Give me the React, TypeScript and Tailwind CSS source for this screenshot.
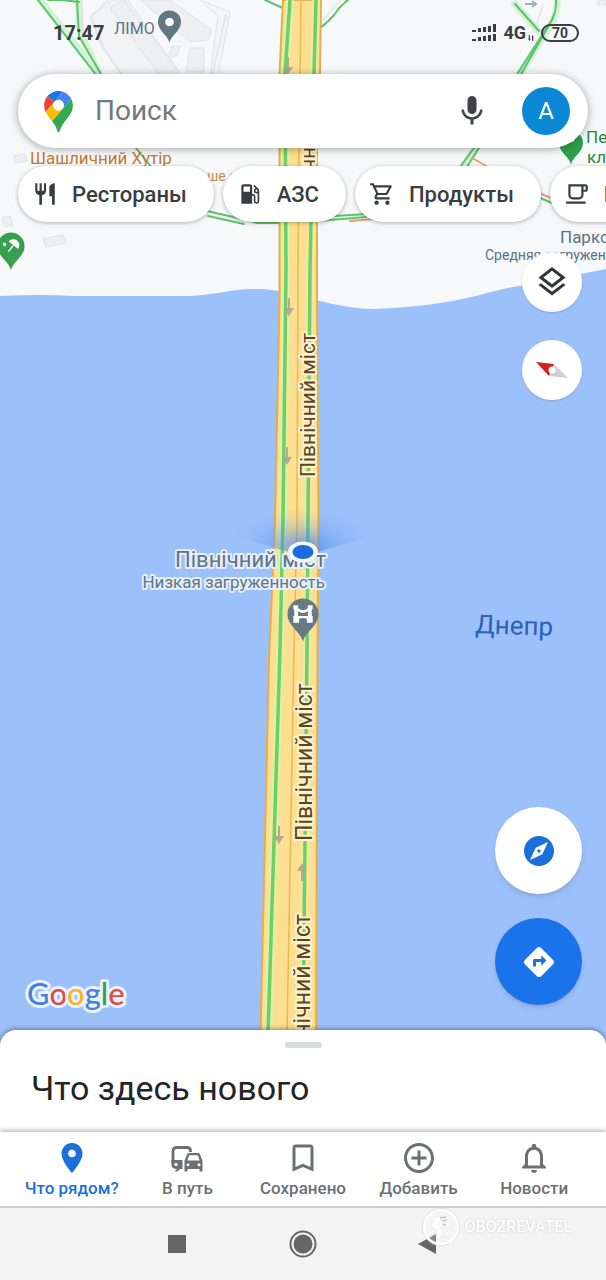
import type { ReactNode } from "react";
import {
    MdAddCircleOutline,
    MdBookmarkBorder,
    MdDirections,
    MdExplore,
    MdLocalGasStation,
    MdMic,
    MdNotificationsNone,
    MdOutlineLayers,
    MdOutlineLocalCafe,
    MdOutlineShoppingCart,
    MdPlace,
    MdRestaurant,
} from "react-icons/md";

const chips = [
    { label: "Рестораны", icon: <MdRestaurant className="size-[26px]" /> },
    { label: "АЗС", icon: <MdLocalGasStation className="size-[26px]" /> },
    { label: "Продукты", icon: <MdOutlineShoppingCart className="size-[26px]" /> },
    { label: "Кофе", icon: <MdOutlineLocalCafe className="size-[26px]" /> },
];

const tabs = [
    { label: "Что рядом?", icon: <MdPlace className="size-9" />, active: true },
    { label: "В путь", icon: <CommuteIcon />, active: false },
    { label: "Сохранено", icon: <MdBookmarkBorder className="size-9" />, active: false },
    { label: "Добавить", icon: <MdAddCircleOutline className="size-9" />, active: false },
    { label: "Новости", icon: <MdNotificationsNone className="size-9" />, active: false },
];

function CommuteIcon() {
    return (
        <svg viewBox="0 0 36 36" className="size-9" fill="none">
            <path d="M4 24V11Q4 7.500 8 7.500H18Q21.500 7.500 21.500 11V12" stroke="currentColor" strokeWidth="2.800" />
            <path d="M2.600 20H13.500V29H11l-2.500 2.500H5.500L8 29Q2.600 29 2.600 25z" fill="currentColor" />
            <circle cx="7" cy="24.500" r="1.700" fill="#fff" />
            <path d="M15.500 21l2.500-6.500q.5-1.500 2-1.500h9q1.500 0 2 1.500l2.500 6.500v10.500h-3V29h-12v2.500h-3z" fill="currentColor" />
            <path d="M18.300 20.500l1.900-5.300h8.600l1.900 5.300z" fill="#fff" />
            <circle cx="19" cy="24.800" r="1.500" fill="#fff" />
            <circle cx="30" cy="24.800" r="1.500" fill="#fff" />
        </svg>
    );
}

function MapsLogo() {
    return (
        <svg viewBox="0 0 92.3 132.3" className="h-[41px] w-[29px]">
            <path fill="#1a73e8" d="M60.2 2.2C55.8.8 51 0 46.1 0 32 0 19.3 6.4 10.8 16.5l21.8 18.3L60.2 2.2z" />
            <path fill="#ea4335" d="M10.800 16.500C4.100 24.500 0 34.900 0 46.100c0 8.700 1.700 15.700 4.600 22l28-33.300-21.800-18.300z" />
            <path fill="#4285f4" d="M46.200 28.500c9.800 0 17.700 7.900 17.700 17.700 0 4.300-1.600 8.300-4.200 11.400 0 0 13.900-16.600 27.500-32.700-5.600-10.800-15.300-19-27-22.700L32.600 34.800c3.300-3.800 8.100-6.300 13.600-6.300" />
            <path fill="#fbbc04" d="M46.200 63.800c-9.800 0-17.700-7.900-17.700-17.700 0-4.300 1.500-8.300 4.100-11.300l-28 33.300c4.800 10.600 12.800 19.200 21 29.900l34.100-40.500c-3.300 3.900-8.100 6.300-13.500 6.300" />
            <path fill="#34a853" d="M59.100 109.200c15.400-24.100 33.300-35 33.300-63 0-7.700-1.900-14.900-5.200-21.300L25.600 98c2.600 3.400 5.300 7.300 7.900 11.300 9.400 14.500 6.800 23.100 12.800 23.100s3.400-8.700 12.800-23.200" />
        </svg>
    );
}

function GoogleLogo() {
    return (
        <svg viewBox="0 0 110 48" className="h-12 w-[110px]" role="img" aria-label="Google">
            <text
                x="5"
                y="32"
                fontSize="31"
                fontWeight="500"
                stroke="#e9f2fe"
                strokeWidth="6"
                strokeLinejoin="round"
                paintOrder="stroke"
                className="font-['Lato',sans-serif]"
            >
                <tspan fill="#4381d6">G</tspan>
                <tspan fill="#dd4b45">o</tspan>
                <tspan fill="#f3b51f">o</tspan>
                <tspan fill="#4381d6">g</tspan>
                <tspan fill="#3a9b58">l</tspan>
                <tspan fill="#dd4b45">e</tspan>
            </text>
        </svg>
    );
}

function Pin({ x, y, r, color, children }: { x: number; y: number; r: number; color: string; children?: ReactNode }) {
    return (
        <g transform={`translate(${x} ${y})`}>
            <g transform={`scale(${r / 16})`}>
                <path d="M0 29C-2 18-16 13-16 0A16 16 0 0 1 16 0C16 13 2 18 0 29z" fill={color} />
                {children}
            </g>
        </g>
    );
}

function RoadArrow({ x, y, up }: { x: number; y: number; up?: boolean }) {
    return <path transform={`translate(${x} ${y}) rotate(${up ? 180 : 0})`} d="M-1-9h2V1H5L0 9-5 1h4z" fill="#a9a58c" opacity="0.9" />;
}

function RoadLabel({ x, y, size, anchor }: { x: number; y: number; size: number; anchor: "middle" | "end" }) {
    return (
        <text
            transform={`translate(${x} ${y}) rotate(-90)`}
            textAnchor={anchor}
            fontSize={size}
            fill="#5b4522"
            stroke="#fff3cf"
            strokeWidth="4"
            strokeLinejoin="round"
            paintOrder="stroke"
        >
            Північний міст
        </text>
    );
}

function MapCanvas() {
    return (
        <svg
            viewBox="0 0 606 1060"
            preserveAspectRatio="xMidYMin slice"
            className="absolute inset-0 h-full w-full font-['Roboto',sans-serif]"
        >
            <defs>
                <radialGradient id="beam" cx="303" cy="548" r="68" gradientUnits="userSpaceOnUse">
                    <stop offset="0" stopColor="#3f7fea" stopOpacity="0.75" />
                    <stop offset="0.5" stopColor="#5b93f0" stopOpacity="0.35" />
                    <stop offset="1" stopColor="#7aa8f5" stopOpacity="0" />
                </radialGradient>
                <linearGradient id="beamFade" x1="0" y1="552" x2="0" y2="508" gradientUnits="userSpaceOnUse">
                    <stop offset="0.2" stopColor="#fff" />
                    <stop offset="1" stopColor="#000" />
                </linearGradient>
                <mask id="beamMask">
                    <rect x="220" y="490" width="166" height="80" fill="url(#beamFade)" />
                </mask>
            </defs>
            <rect width="606" height="1300" fill="#f6f8fa" />

            {/* blocks and buildings */}
            <g fill="#edeff2" stroke="#dfe2e6" strokeWidth="1">
                <path d="M113 0L92 14l8 30 22 32h60L128 0z" fill="#f1f3f5" />
                <path d="M124 0l58 76h-22L110 8z" />
                <path d="M140 0h30l42 30-4 10-18 2z" />
                <path d="M200 0l30 12-12 64h-8l8-60z" fill="#f3f5f7" />
                <path d="M190 48h14v24h-18zM172 46h8l-3 10h-8z" />
                <path d="M14 156l11-2 2 7-11 2zM2 218l8-2 3 9-8 2zM43 239l20-4 3 8-20 4zM598 0h8v5h-8z" />
            </g>
            <g fill="none" stroke="#e2e4e9" strokeWidth="1.500">
                <path d="M108 0L90 18l14 30 20 30M226 14l-14 62M76 4v20M543 4l-6 20M320 24L340 0" />
            </g>

            {/* side streets with traffic */}
            <g fill="none" strokeLinecap="round">
                <g stroke="#d4f1d8" strokeWidth="7">
                    <path d="M40 0l60 76M79 0l2 34 20 44M557 0q1 15-8 28l-32 50M515 4l26 30M476 148l-14 20" />
                </g>
                <g stroke="#5cc46b" strokeWidth="2">
                    <path d="M38 0l59 76M77 0l2 36 23 40M48 0h14l17 2M265 0l20 9" />
                    <path d="M556 0q1 14-8 26l-32 50M553 18l-33 58M515 4l24 27" />
                    <path d="M348 0q-8 6-14 15-10 12-19 15" />
                    <path d="M474 148l-16 22M479 148l-14 22M136 148l16 20M207 211l26 6 24 6h30" />
                    <path d="M208 216l36 8M318 221l48-4M318 217l50-3M538 197l14 6" />
                </g>
                <path d="M472 158l18 10M350 221l24-2M537 192l14 6" stroke="#ee9a72" strokeWidth="2" />
            </g>
            <path d="M525 4h10M532 1l4 3-4 3" fill="none" stroke="#a8adc4" strokeWidth="2" />

            {/* river */}
            <path
                d="M0 296Q40 294 75 296H188C215 295 235 288 258 289C278 289 300 296 316 300Q350 309 375 309Q415 307 440 303C480 297 500 288 520 286L606 269V1300H0z"
                fill="#9cc0f9"
            />

            {/* bridge */}
            <path
                d="M283 0L279.500 74V300L275 520L269 660L260.500 1035L258 1300H313L316 1035L317.500 660L318.500 520L317 300V150L320 74L321 0z"
                fill="#fddf91"
                stroke="#e2ae50"
                strokeWidth="2"
            />
            <g fill="none">
                <path d="M290 0L285 74L286 270L283 520L280 650L268 1035L264 1300" stroke="#dcf3a4" strokeWidth="8" />
                <path d="M316 0L314 74L310 270L308 520L307 650L303 1035" stroke="#eeeba0" strokeWidth="8" />
                <path d="M301 0L299 150L298 270L297 520L294 650L287 1035L284 1300" stroke="#eab94f" strokeWidth="1.500" />
                <path d="M290 0L285 74L286 270L283 520L280 650L268 1035L264 1300" stroke="#6fce69" strokeWidth="3.500" />
                <path d="M316 0L314 74L310 270L308 520L307 650L303 1035" stroke="#6fce69" strokeWidth="3.500" />
            </g>
            <RoadArrow x={288} y={66} />
            <RoadArrow x={289} y={307} />
            <RoadArrow x={287} y={456} />
            <RoadArrow x={279} y={835} />
            <RoadArrow x={302} y={872} up />

            <RoadLabel x={315} y={148} size={20} anchor="middle" />
            <RoadLabel x={315} y={405} size={21} anchor="middle" />
            <RoadLabel x={312} y={762} size={23} anchor="middle" />
            <RoadLabel x={310} y={914} size={23} anchor="end" />

            {/* heading beam */}
            <path d="M303 556L232 536Q303 480 374 536z" fill="url(#beam)" mask="url(#beamMask)" />

            {/* places */}
            <text x="114" y="34" fontSize="16" fill="#65737d">ЛІМО</text>
            <Pin x={169.500} y={22} r={11.500} color="#627782">
                <circle r="6" fill="#fff" />
            </Pin>
            <text x="30" y="164" fontSize="17" fill="#c17a35">Шашличний Хутір</text>
            <text x="207" y="181" fontSize="14" fill="#c98a4a">ше с</text>
            <Pin x={11} y={246} r={13.500} color="#36a04f">
                <g transform="rotate(38) scale(0.8)" fill="#fff">
                    <path d="M-9-1A9 9 0 0 1 9-1z" transform="translate(2 -2)" />
                    <path d="M1-2h2V9H1z" />
                    <circle cx="-9" cy="4" r="2.500" />
                </g>
            </Pin>
            <Pin x={571} y={143} r={12} color="#2f9f4b">
                <circle cy="-6" r="5" fill="#fff" />
            </Pin>
            <text x="586" y="143" fontSize="17" fill="#2c8545">Пе</text>
            <text x="587" y="163" fontSize="17" fill="#2c8545">кл</text>
            <text x="560" y="243" fontSize="17" fill="#5a7482">Парко</text>
            <text x="485" y="260" fontSize="14" fill="#5a7482">Средняя загружен</text>
            <text transform="translate(475 633) rotate(2)" fontSize="26" fill="#2b62b5">Днепр</text>
            <g fill="#5f7387" stroke="#e6effc" strokeWidth="4" strokeLinejoin="round" textAnchor="end">
                <text x="326" y="567" fontSize="22" paintOrder="stroke">Північний міст</text>
                <text x="325" y="588" fontSize="17" paintOrder="stroke">Низкая загруженность</text>
            </g>
            <Pin x={303} y={614} r={15.500} color="#667985">
                <path
                    d="M-10-9h5v3q5 4 10 0v-3h5V-5H9V2h1V9H4V5Q0 3-4 5V9h-6V2h1V-5h-1zM-5-3v5H5v-5Q0 1-5-3z"
                    fill="#fff"
                    fillRule="evenodd"
                />
            </Pin>
            <ellipse cx="303" cy="552" rx="15" ry="10.500" fill="#f3f6fb" />
            <ellipse cx="303" cy="552" rx="10.500" ry="7" fill="#1c6be0" />
        </svg>
    );
}

function StatusBar() {
    return (
        <div className="flex h-[66px] items-center justify-between pr-[27px] pl-[53px] text-[#3b3d40]">
            <span className="text-xl font-bold">17:47</span>
            <div className="flex items-center gap-[7px]">
                <svg viewBox="0 0 24 18" className="h-[18px] w-6" fill="currentColor">
                    <path d="M0 6h4v2H0zM6 4h3v4H6zM11 3h3v5h-3zM16 2h3v6h-3zM21 0h3v8h-3z" />
                    <path d="M0 15h4v2H0zM6 13h3v4H6zM11 12h3v5h-3zM16 11h3v6h-3zM21 10h3v7h-3z" />
                </svg>
                <div className="flex items-end gap-0.5">
                    <span className="text-lg leading-5 font-bold">4G</span>
                    <svg viewBox="0 0 8 8" className="mb-0.5 size-1.5" fill="currentColor">
                        <path d="M1 0h1.500v5h1L2 8 0 5h1zM5.500 8V3h-1L6 0l1.500 3h-.5v5z" />
                    </svg>
                </div>
                <span className="flex h-[18px] w-[38px] items-center justify-center rounded-full border-2 border-current text-sm leading-none font-bold">
                    70
                </span>
            </div>
        </div>
    );
}

function SearchBar() {
    return (
        <div className="mx-[18px] mt-2 flex h-[74px] items-center rounded-full bg-white pr-[18px] pl-[26px] shadow-[0_1px_8px_rgba(0,0,0,0.35)]">
            <MapsLogo />
            <input
                type="text"
                aria-label="Поиск"
                placeholder="Поиск"
                className="ml-[22px] min-w-0 flex-1 bg-transparent text-[28px] outline-none placeholder:text-[#74787c]"
            />
            <button aria-label="Голосовой поиск" className="mr-8 text-[#404347]">
                <MdMic className="size-9" />
            </button>
            <button className="flex size-12 items-center justify-center rounded-full bg-[#0a88d6] text-2xl text-white">
                A
            </button>
        </div>
    );
}

function Chips() {
    return (
        <div className="flex gap-[9px] overflow-hidden py-[18px] pl-[18px]">
            {chips.map((chip) => (
                <button
                    key={chip.label}
                    className="flex h-14 shrink-0 items-center gap-3.5 rounded-full bg-white pr-[27px] pl-[14px] text-[22px] font-medium text-[#3a3d40] shadow-[0_1px_4px_rgba(0,0,0,0.3)]"
                >
                    {chip.icon}
                    {chip.label}
                </button>
            ))}
        </div>
    );
}

function MapControls() {
    return (
        <div className="mt-3 mr-6 flex flex-col items-end gap-7">
            <button aria-label="Слои" className="flex size-[60px] items-center justify-center rounded-full bg-white text-[#333538] shadow">
                <MdOutlineLayers className="size-9" />
            </button>
            <button aria-label="Компас" className="flex size-[60px] items-center justify-center rounded-full bg-white shadow">
                <svg viewBox="0 0 34 20" className="h-5 w-[34px]">
                    <path d="M1 2l18 2-5 12z" fill="#d3201f" />
                    <path d="M19 4l14 14-19-2z" fill="#cfcfd6" />
                    <circle cx="17" cy="10" r="3.500" fill="#fff" />
                </svg>
            </button>
        </div>
    );
}

function BottomSheet() {
    return (
        <section className="relative -mt-4 rounded-t-2xl bg-white shadow-[0_-1px_5px_rgba(0,0,0,0.4)]">
            <div className="flex justify-center pt-3">
                <div className="h-1.5 w-[37px] rounded-full bg-[#d9dadc]" />
            </div>
            <h1 className="px-[31px] pt-5 pb-6 text-[34px] leading-10 text-[#222427]">Что здесь нового</h1>
        </section>
    );
}

function TabBar() {
    return (
        <nav className="relative grid h-[76px] grid-cols-5 border-b-2 border-[#cdcdcd] bg-white px-[14px] shadow-[0_-1px_5px_rgba(0,0,0,0.35)]">
            {tabs.map((tab) => (
                <a
                    key={tab.label}
                    href="#"
                    className={
                        tab.active
                            ? "flex flex-col items-center pt-2 text-[#1b6fdd]"
                            : "flex flex-col items-center pt-2 text-[#6c7074]"
                    }
                >
                    {tab.icon}
                    <span className="text-[17px] leading-6 font-medium whitespace-nowrap">{tab.label}</span>
                </a>
            ))}
        </nav>
    );
}

function SystemBar() {
    return (
        <div className="relative flex h-[72px] items-center justify-center gap-24 bg-[#f3f3f3] text-[#666]">
            <button aria-label="Недавние" className="flex size-[30px] items-center justify-center">
                <span className="size-[18px] bg-current" />
            </button>
            <button aria-label="Домой" className="flex size-[30px] items-center justify-center">
                <svg viewBox="0 0 30 30" className="size-[30px]">
                    <circle cx="15" cy="15" r="12.500" fill="none" stroke="currentColor" strokeWidth="2" />
                    <circle cx="15" cy="15" r="9.500" fill="currentColor" />
                </svg>
            </button>
            <button aria-label="Назад" className="flex size-[30px] items-center justify-center">
                <svg viewBox="0 0 30 30" className="size-[30px]">
                    <path d="M4 15L22 5v20z" fill="currentColor" />
                </svg>
            </button>

            <div className="absolute top-0 right-[34px] flex items-center gap-1">
                <svg viewBox="0 0 38 38" className="size-[38px]">
                    <circle cx="19" cy="19" r="17" fill="#fff" fillOpacity="0.2" stroke="#fff" strokeWidth="2.500" />
                    <circle cx="19" cy="19" r="18.500" fill="none" stroke="#e2e2e2" strokeWidth="1" />
                    <path
                        d="M14 9q-5 4-4 11l4 2 1 5 4 3 2-6-3-4 5-3-1-3-4-2 3-4zM29 17l-3 6-4 3 1 4q7-4 6-13z"
                        fill="#fff"
                        fillOpacity="0.8"
                        stroke="#e0e0e0"
                        strokeWidth="0.500"
                    />
                    <path d="M18 10l6-1M20 13l5-1M20 16l4 1" stroke="#c9c9c9" strokeWidth="1.500" />
                </svg>
                <span className="text-base font-medium text-white [text-shadow:0_0_2px_#c4c4c4]">OBOZREVATEL</span>
            </div>
        </div>
    );
}

export default function App() {
    return (
        <div className="flex min-h-screen flex-col overflow-hidden bg-white font-['Roboto',sans-serif]">
            <main className="relative flex flex-1 flex-col">
                <MapCanvas />
                <div className="relative flex flex-1 flex-col">
                    <StatusBar />
                    <SearchBar />
                    <Chips />
                    <MapControls />
                    <div className="mt-auto flex items-end justify-between pt-10 pr-6 pb-[25px] pl-[22px]">
                        <GoogleLogo />
                        <div className="mb-4 flex flex-col gap-6">
                            <button aria-label="Обзор" className="flex size-[87px] items-center justify-center rounded-full bg-white text-[#1b6fdd] shadow-md">
                                <MdExplore className="size-9" />
                            </button>
                            <button aria-label="Маршруты" className="flex size-[87px] items-center justify-center rounded-full bg-[#1a73e8] text-white shadow-md">
                                <MdDirections className="size-9" />
                            </button>
                        </div>
                    </div>
                </div>
            </main>
            <BottomSheet />
            <TabBar />
            <SystemBar />
        </div>
    );
}
